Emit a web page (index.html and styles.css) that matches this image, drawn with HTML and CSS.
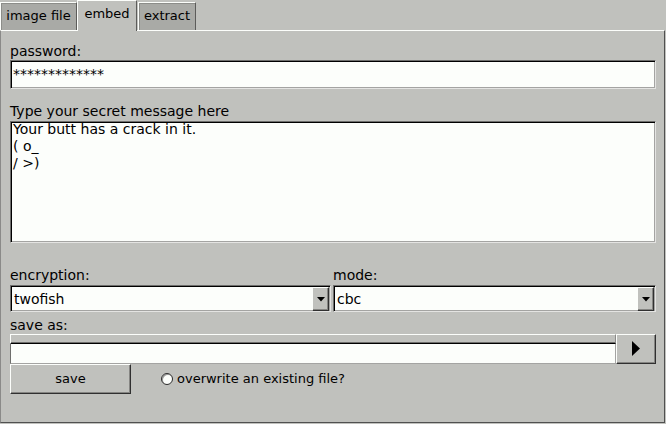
FILE: index.html
```html
<!DOCTYPE html>
<html>
<head>
<meta charset="utf-8">
<title>embed</title>
<link rel="stylesheet" href="styles.css">
</head>
<body>
<div class="window">
  <div class="tabs">
    <div class="tab tab-image">image file</div>
    <div class="tab tab-embed active">embed</div>
    <div class="tab tab-extract">extract</div>
  </div>
  <div class="panel">
    <div class="lbl lbl-first">password:</div>
    <div class="down field">*************</div>
    <div class="lbl lbl-msg">Type your secret message here</div>
    <div class="down textarea"><div class="textarea-text">Your butt has a crack in it.
( o_
/ &gt;)</div></div>
    <div class="choices">
      <div class="choice-col">
        <div class="lbl">encryption:</div>
        <div class="down choice">
          <span class="choice-text">twofish</span>
          <span class="up choice-btn"><svg width="8" height="5" viewBox="0 0 8 5"><path d="M0 0H8L4 4.5Z" fill="#000"/></svg></span>
        </div>
      </div>
      <div class="choice-col">
        <div class="lbl">mode:</div>
        <div class="down choice">
          <span class="choice-text">cbc</span>
          <span class="up choice-btn"><svg width="8" height="5" viewBox="0 0 8 5"><path d="M0 0H8L4 4.5Z" fill="#000"/></svg></span>
        </div>
      </div>
    </div>
    <div class="lbl lbl-save">save as:</div>
    <div class="file-row">
      <div class="file-input">
        <div class="file-bar"></div>
        <div class="file-field"></div>
      </div>
      <div class="up arrow-btn"><svg width="8" height="15" viewBox="0 0 8 15"><path d="M0 0L8 7.5L0 15Z" fill="#000"/></svg></div>
    </div>
    <div class="save-row">
      <div class="up save-btn">save</div>
      <div class="radio"></div>
      <div class="radio-label">overwrite an existing file?</div>
    </div>
  </div>
</div>
</body>
</html>
```
FILE: styles.css
```css
* { box-sizing: border-box; }
html, body { margin: 0; padding: 0; }
body {
  width: 666px;
  height: 424px;
  background: #c0c1bd;
  font-family: "DejaVu Sans", sans-serif;
  font-size: 14px;
  color: #000;
  overflow: hidden;
}
.window {
  width: 666px;
  height: 424px;
  display: flex;
  flex-direction: column;
}
.tabs {
  display: flex;
  align-items: flex-end;
  height: 30px;
  flex: none;
  position: relative;
  z-index: 1;
}
.tab {
  height: 28px;
  font-size: 13px;
  line-height: 26px;
  text-align: center;
  background: #a9aaa6;
  border: 1px solid #fcfefb;
  border-bottom: none;
  border-right-color: #5c5c5a;
  box-shadow: inset 1px 1px 0 #8c8d89;
  white-space: nowrap;
}
.tab-image { width: 77px; }
.tab-embed { width: 60px; }
.tab-extract { width: 58px; margin-left: 1px; }
.tab.active {
  height: 31px;
  margin-bottom: -1px;
  background: #c0c1bd;
  box-shadow: none;
}
.panel {
  flex: none;
  height: 393px;
  width: 665px;
  border-top: 1px solid #fcfefb;
  border-left: 1px solid #8a8a88;
  border-right: 1px solid #505050;
  border-bottom: 1px solid #505050;
  padding: 0 8px 0 9px;
  display: flex;
  flex-direction: column;
}
.lbl {
  height: 19px;
  line-height: 19px;
  white-space: nowrap;
}
.lbl-first { margin-top: 11px; height: 18px; line-height: 18px; }
.lbl-msg { margin-top: 13px; }
.lbl-save { height: 22px; line-height: 18px; padding-top: 4px; }
.down {
  background: #fcfefb;
  border: 1px solid;
  border-color: #6e6e6c #e4e4e2 #e4e4e2 #6e6e6c;
  box-shadow: inset 1px 1px 0 #000, inset -1px -1px 0 #a4a4a2;
}
.up {
  background: #c0c1bd;
  border: 1px solid;
  border-color: #fcfefb #303030 #303030 #fcfefb;
  box-shadow: inset -1px -1px 0 #858582;
}
.field {
  height: 29px;
  line-height: 27px;
  padding-left: 2px;
}
.textarea {
  height: 122px;
  padding-left: 2px;
}
.textarea-text {
  white-space: pre;
  line-height: 17px;
  margin-top: -1px;
}
.choices {
  margin-top: 23px;
  display: grid;
  grid-template-columns: 321px 1fr;
  column-gap: 2px;
}
.choice {
  height: 27px;
  display: flex;
  align-items: stretch;
  padding: 1px 1px 0 3px;
}
.choice-text {
  flex: 1;
  line-height: 24px;
}
.choice-btn {
  width: 17px;
  display: flex;
  align-items: center;
  justify-content: center;
}
.file-row {
  display: flex;
  height: 30px;
}
.file-input {
  flex: 1;
  display: flex;
  flex-direction: column;
}
.file-bar {
  height: 10px;
  background: #c0c1bd;
  border-top: 1px solid #fcfefb;
  border-left: 1px solid #fcfefb;
  border-right: 1px solid #8a8a88;
  border-bottom: 1px solid #000;
  box-shadow: inset 0 -1px 0 #6e6e6c;
}
.file-field {
  height: 20px;
  background: #fcfefb;
  border-left: 1px solid #6e6e6c;
  border-right: 1px solid #a4a4a2;
  border-bottom: 1px solid #a4a4a2;
}
.arrow-btn {
  width: 40px;
  display: flex;
  align-items: center;
  justify-content: center;
}
.arrow-btn svg { margin-bottom: 2px; }
.save-row {
  display: flex;
  align-items: center;
  height: 30px;
}
.save-btn {
  width: 121px;
  height: 30px;
  font-size: 13px;
  line-height: 28px;
  text-align: center;
}
.radio {
  width: 12px;
  height: 12px;
  margin-left: 30px;
  border-radius: 50%;
  background: #fcfefb;
  border: 1px solid #2a2a2a;
  box-shadow: inset 1px 1px 0 #9a9a98;
}
.radio-label {
  margin-left: 4px;
  font-size: 13px;
  line-height: 30px;
  white-space: nowrap;
}
```
